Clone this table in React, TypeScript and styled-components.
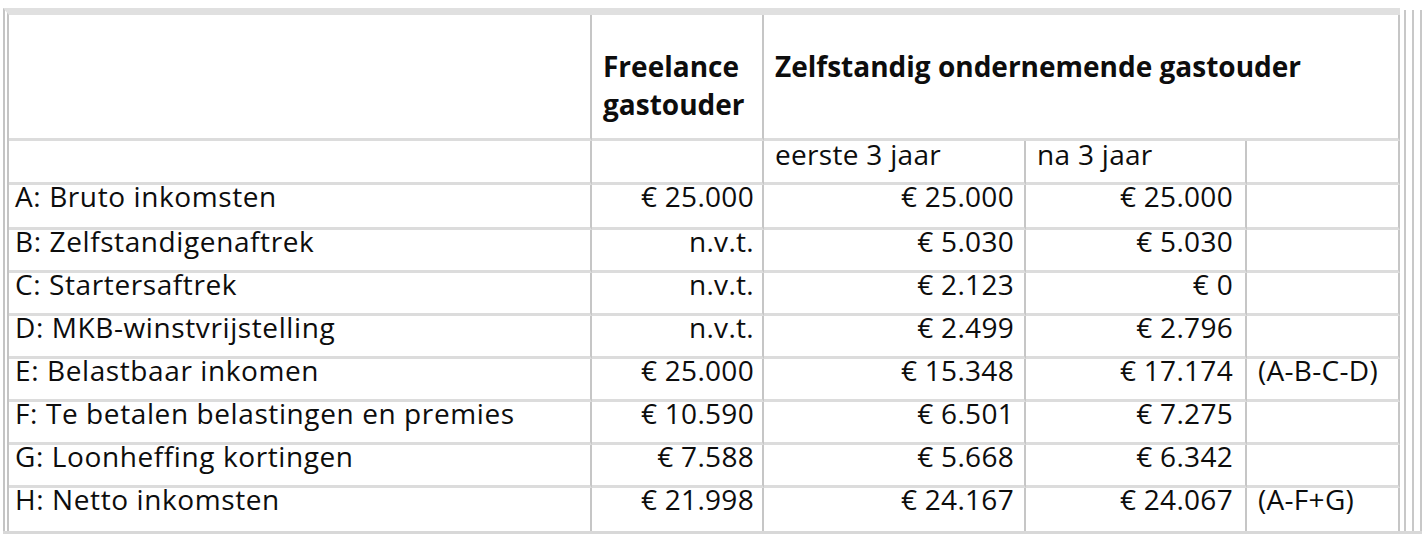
import styled, { createGlobalStyle } from "styled-components";

const GlobalStyle = createGlobalStyle`
  *, *::before, *::after { box-sizing: border-box; }
  body {
    margin: 0;
    background: #ffffff;
    color: #0d0d0d;
    font-family: "Open Sans", "Noto Sans", sans-serif;
  }
`;

interface Row {
  label: string;
  freelance: string;
  first: string;
  after: string;
  note?: string;
}

const rows: Row[] = [
  { label: "A: Bruto inkomsten", freelance: "€ 25.000", first: "€ 25.000", after: "€ 25.000" },
  { label: "B: Zelfstandigenaftrek", freelance: "n.v.t.", first: "€ 5.030", after: "€ 5.030" },
  { label: "C: Startersaftrek", freelance: "n.v.t.", first: "€ 2.123", after: "€ 0" },
  { label: "D: MKB-winstvrijstelling", freelance: "n.v.t.", first: "€ 2.499", after: "€ 2.796" },
  { label: "E: Belastbaar inkomen", freelance: "€ 25.000", first: "€ 15.348", after: "€ 17.174", note: "(A-B-C-D)" },
  { label: "F: Te betalen belastingen en premies", freelance: "€ 10.590", first: "€ 6.501", after: "€ 7.275" },
  { label: "G: Loonheffing kortingen", freelance: "€ 7.588", first: "€ 5.668", after: "€ 6.342" },
  { label: "H: Netto inkomsten", freelance: "€ 21.998", first: "€ 24.167", after: "€ 24.067", note: "(A-F+G)" },
];

export default function App() {
  return (
    <>
      <GlobalStyle />
      <Frame>
        <Sheet>
          <Table>
            <colgroup>
              <col style={{ width: 583 }} />
              <col style={{ width: 172 }} />
              <col style={{ width: 262 }} />
              <col style={{ width: 221 }} />
              <col style={{ width: 153 }} />
            </colgroup>
            <tbody>
              <HeadRow>
                <HeadCell />
                <HeadCell>
                  Freelance
                  <br />
                  gastouder
                </HeadCell>
                <HeadCell colSpan={3}>Zelfstandig ondernemende gastouder</HeadCell>
              </HeadRow>
              <SubRow>
                <Cell />
                <Cell />
                <Cell>eerste 3 jaar</Cell>
                <Cell>na 3 jaar</Cell>
                <Cell />
              </SubRow>
              {rows.map((row) => (
                <DataRow key={row.label}>
                  <Label>{row.label}</Label>
                  <Cell $align="right" $right={8}>
                    {row.freelance}
                  </Cell>
                  <Cell $align="right">{row.first}</Cell>
                  <Cell $align="right" $right={12}>
                    {row.after}
                  </Cell>
                  <Cell>{row.note}</Cell>
                </DataRow>
              ))}
            </tbody>
          </Table>
        </Sheet>
        <Rail $gap={4} />
        <Rail $gap={6} />
        <Rail $gap={6} />
      </Frame>
    </>
  );
}

const Frame = styled.div`
  display: flex;
  align-items: stretch;
  width: 1419px;
  margin: 8px 0 0 3px;
  border-bottom: 3px solid #d8d8d8;
`;

const Sheet = styled.div`
  flex: 0 0 1397px;
  border-left: 6px double #c4c4c4;
  border-top: 7px solid #e0e0e0;
`;

const Rail = styled.div<{ $gap: number }>`
  flex: 0 0 2px;
  margin-left: ${(p) => p.$gap}px;
  margin-top: 2px;
  background: #c8c8c8;
`;

const Table = styled.table`
  width: 1391px;
  table-layout: fixed;
  border-collapse: separate;
  border-spacing: 0;
  font-size: 28px;
  font-weight: 500;
  letter-spacing: 0.3px;
`;

const Cell = styled.td<{ $align?: "left" | "right"; $right?: number }>`
  padding: 0 ${(p) => p.$right ?? 10}px 0 11px;
  vertical-align: top;
  line-height: 22px;
  text-align: ${(p) => p.$align ?? "left"};
  white-space: nowrap;
  border-right: 2px solid #c6c6c6;
  border-bottom: 3px solid #dcdcdc;

  &:first-child {
    padding-left: 6px;
  }
`;

const Label = styled(Cell)`
  letter-spacing: 0.6px;
`;

const HeadCell = styled(Cell)`
  padding-top: 32px;
  font-weight: 700;
  line-height: 38px;
  letter-spacing: 0;
`;

const HeadRow = styled.tr`
  height: 126px;
`;

const SubRow = styled.tr`
  height: 44px;

  td {
    padding-top: 2px;
  }
`;

const DataRow = styled.tr`
  height: 43px;

  &:nth-child(3) {
    height: 45px;
  }

  &:last-child td {
    border-bottom: none;
  }
`;
